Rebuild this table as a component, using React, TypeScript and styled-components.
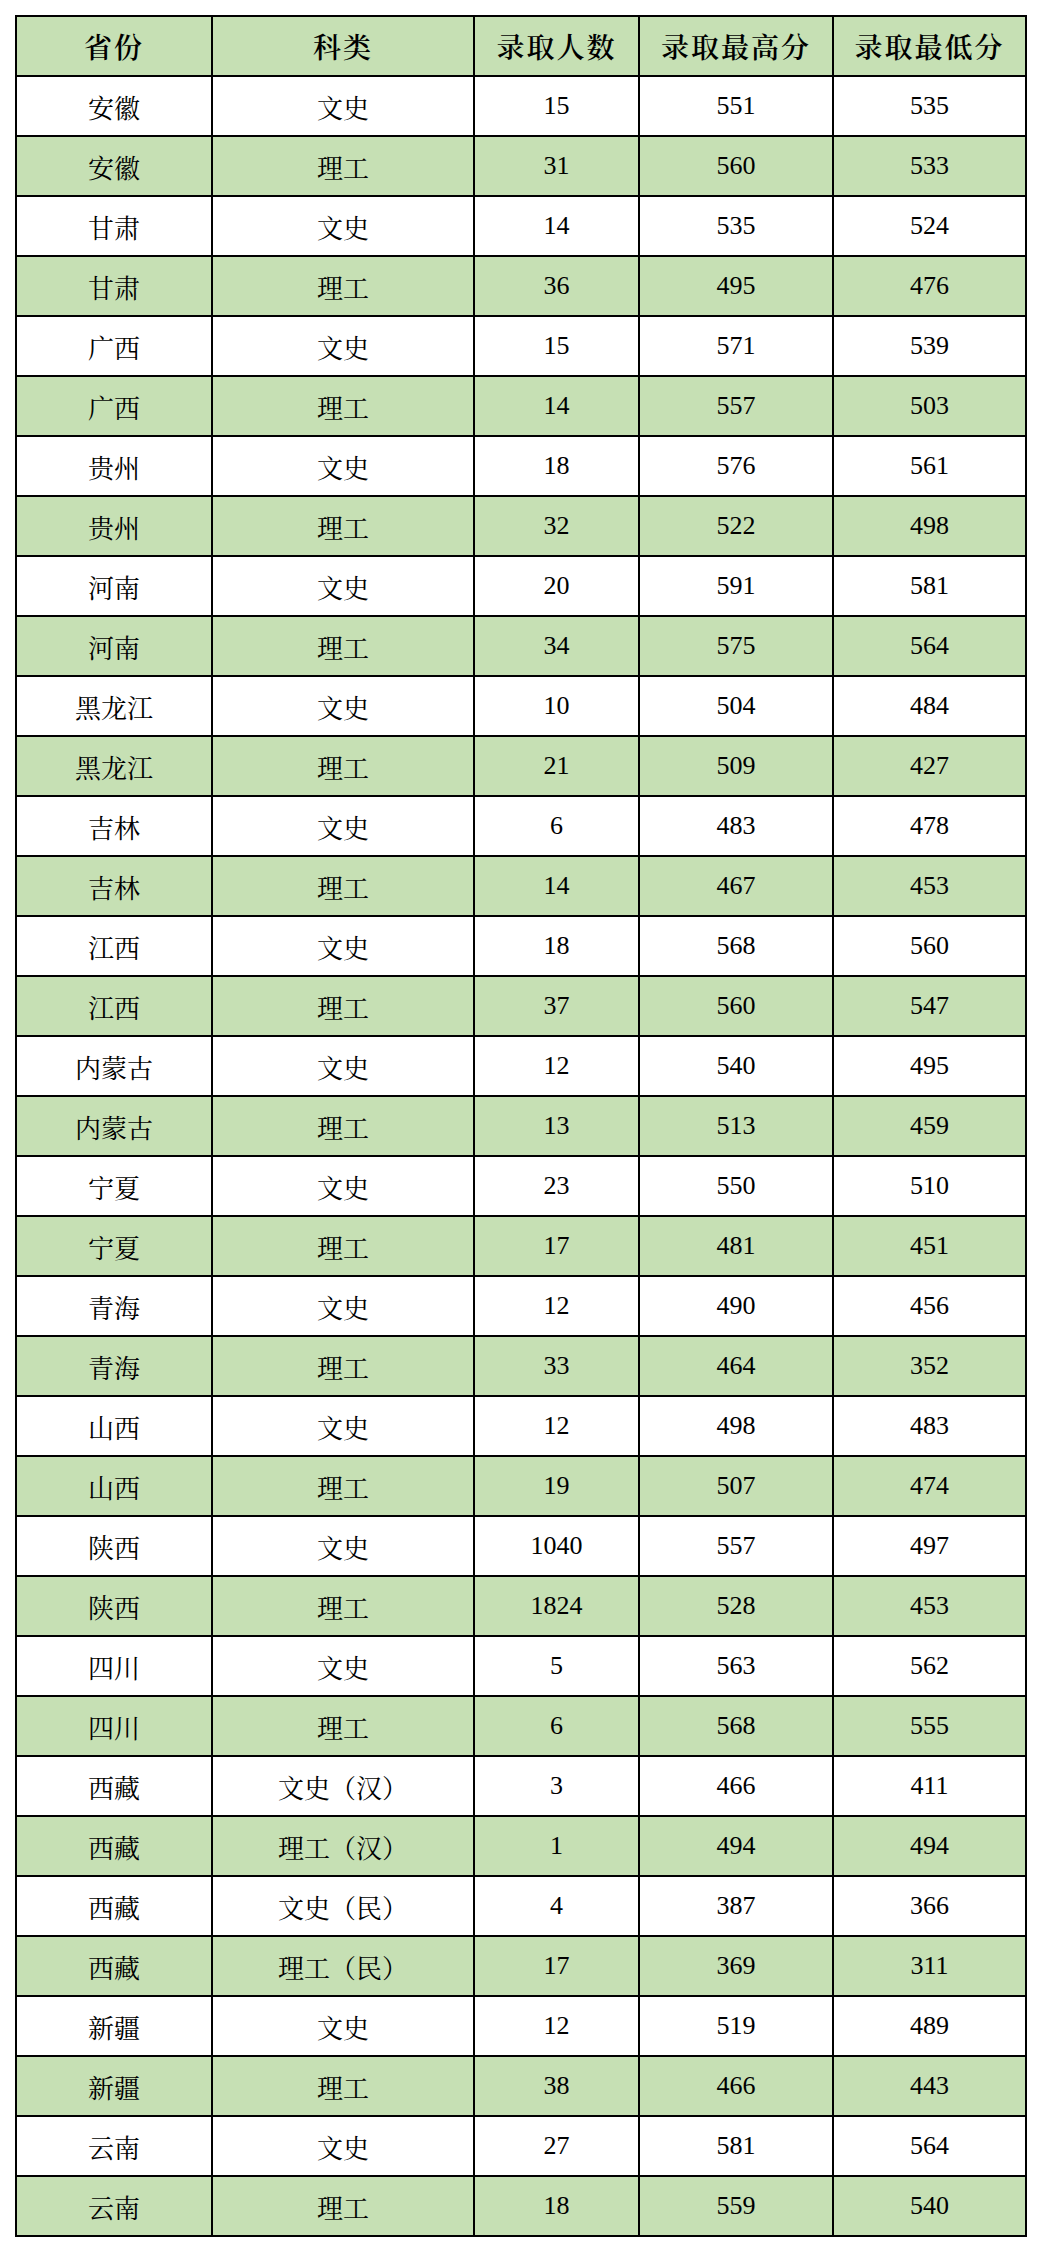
import React from "react";
import styled, { createGlobalStyle } from "styled-components";

const Global = createGlobalStyle`
  html, body { margin: 0; padding: 0; background: #ffffff; }
  body { font-family: "Liberation Serif", "Noto Serif CJK SC", "Noto Sans CJK SC", serif; }
`;

const Page = styled.div`
  padding: 15px 17px 15px 15px;
  width: 1044px;
  box-sizing: border-box;
`;

const Grid = styled.div`
  display: grid;
  grid-template-columns: 196px 262px 165px 194px 193px;
  grid-auto-rows: 60px;
  border-left: 2px solid #000;
  border-top: 2px solid #000;
  width: 1012px;
  box-sizing: border-box;
`;

const Cell = styled.div<{ $green: boolean; $head?: boolean }>`
  box-sizing: border-box;
  border-right: 2px solid #000;
  border-bottom: 2px solid #000;
  background: ${(p) => (p.$green ? "#c6e0b4" : "#ffffff")};
  display: flex;
  align-items: center;
  justify-content: center;
  color: #000;
  font-size: ${(p) => (p.$head ? "28px" : "26px")};
  font-weight: ${(p) => (p.$head ? 600 : 400)};
  letter-spacing: ${(p) => (p.$head ? "2px" : "0")};
  white-space: nowrap;
`;

const headers = ["省份", "科类", "录取人数", "录取最高分", "录取最低分"];

const rows: [string, string, string, string, string][] = [
  ["安徽", "文史", "15", "551", "535"],
  ["安徽", "理工", "31", "560", "533"],
  ["甘肃", "文史", "14", "535", "524"],
  ["甘肃", "理工", "36", "495", "476"],
  ["广西", "文史", "15", "571", "539"],
  ["广西", "理工", "14", "557", "503"],
  ["贵州", "文史", "18", "576", "561"],
  ["贵州", "理工", "32", "522", "498"],
  ["河南", "文史", "20", "591", "581"],
  ["河南", "理工", "34", "575", "564"],
  ["黑龙江", "文史", "10", "504", "484"],
  ["黑龙江", "理工", "21", "509", "427"],
  ["吉林", "文史", "6", "483", "478"],
  ["吉林", "理工", "14", "467", "453"],
  ["江西", "文史", "18", "568", "560"],
  ["江西", "理工", "37", "560", "547"],
  ["内蒙古", "文史", "12", "540", "495"],
  ["内蒙古", "理工", "13", "513", "459"],
  ["宁夏", "文史", "23", "550", "510"],
  ["宁夏", "理工", "17", "481", "451"],
  ["青海", "文史", "12", "490", "456"],
  ["青海", "理工", "33", "464", "352"],
  ["山西", "文史", "12", "498", "483"],
  ["山西", "理工", "19", "507", "474"],
  ["陕西", "文史", "1040", "557", "497"],
  ["陕西", "理工", "1824", "528", "453"],
  ["四川", "文史", "5", "563", "562"],
  ["四川", "理工", "6", "568", "555"],
  ["西藏", "文史（汉）", "3", "466", "411"],
  ["西藏", "理工（汉）", "1", "494", "494"],
  ["西藏", "文史（民）", "4", "387", "366"],
  ["西藏", "理工（民）", "17", "369", "311"],
  ["新疆", "文史", "12", "519", "489"],
  ["新疆", "理工", "38", "466", "443"],
  ["云南", "文史", "27", "581", "564"],
  ["云南", "理工", "18", "559", "540"],
];

export default function App() {
  return (
    <Page>
      <Global />
      <Grid>
        {headers.map((h) => (
          <Cell key={h} $green $head>
            {h}
          </Cell>
        ))}
        {rows.map((r, i) =>
          r.map((v, j) => (
            <Cell key={`${i}-${j}`} $green={i % 2 === 1}>
              {v}
            </Cell>
          ))
        )}
      </Grid>
    </Page>
  );
}
